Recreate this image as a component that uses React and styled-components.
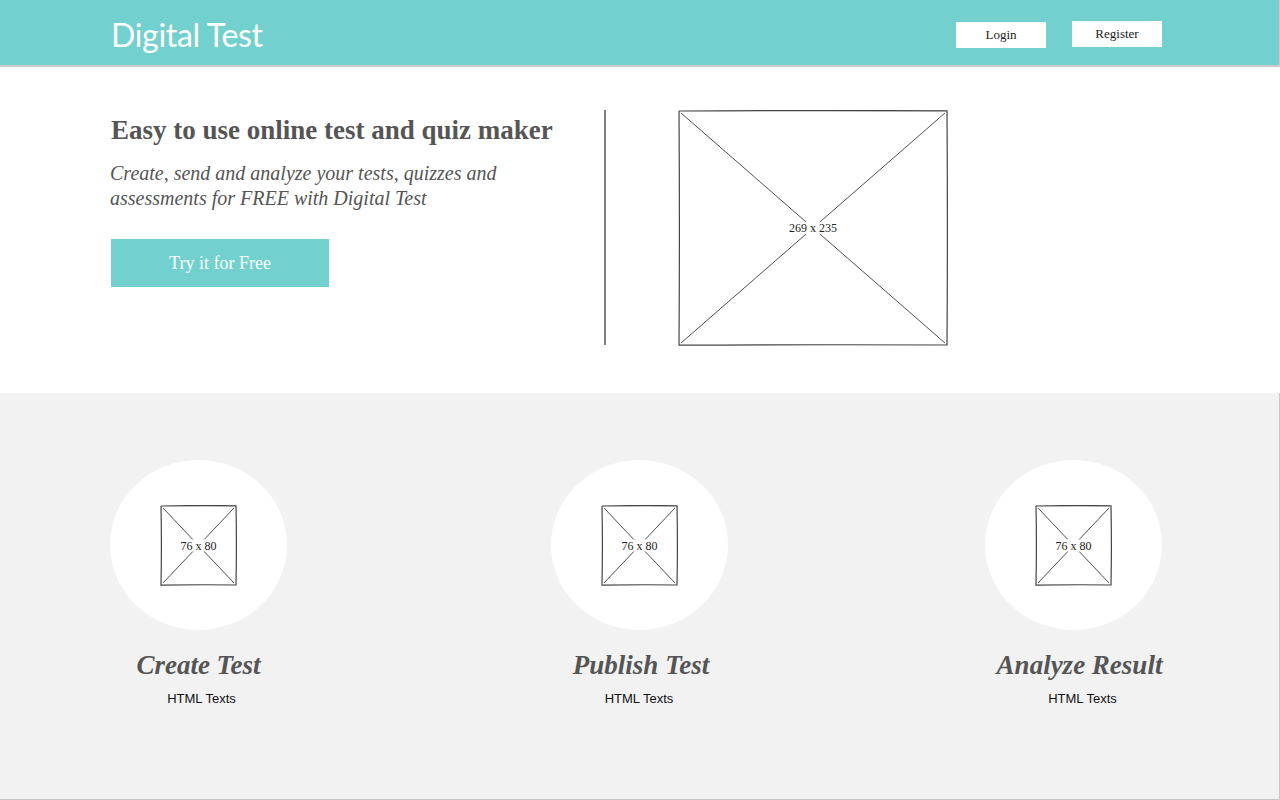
import React from 'react'
import styled, { createGlobalStyle } from 'styled-components'

const teal = '#72d1ce'
const ink = '#555555'

const GlobalStyle = createGlobalStyle`
    body {
        margin: 0;
        background: #ffffff;
        font-family: "Liberation Serif", "Times New Roman", serif;
    }
`

// dx values nudge the captions the way the mockup has them
const features = [
    { title: 'Create Test', text: 'HTML Texts', shift: 0, titleDx: 0, textDx: 3 },
    { title: 'Publish Test', text: 'HTML Texts', shift: 3, titleDx: 2, textDx: 0 },
    { title: 'Analyze Result', text: 'HTML Texts', shift: 0, titleDx: 6, textDx: 9 },
]

// wireframe image placeholder, diagonals stop just around the label
function Sketch({ w, h, label }) {
    const i = 3
    const cx = w / 2
    const cy = h / 2
    const g = 6
    const dx = ((cy - g - i) * (w - 2 * i)) / (h - 2 * i)
    const a = i + dx
    const b = w - i - dx
    return (
        <svg width={w} height={h} viewBox={`0 0 ${w} ${h}`}>
            <path
                d={`M1,1 Q${cx},0.2 ${w - 1},0.8 Q${w - 0.2},${cy} ${w - 1},${h - 1} Q${cx},${h - 1.6} 1,${h - 0.8} Q1.8,${cy} 1,1`}
                fill="none"
                stroke="#444"
                strokeWidth="1.2"
            />
            <line x1={i} y1={i} x2={a} y2={cy - g} stroke="#222" strokeWidth="0.8" />
            <line x1={w - i} y1={i} x2={b} y2={cy - g} stroke="#222" strokeWidth="0.8" />
            <line x1={a} y1={cy + g} x2={i} y2={h - i} stroke="#222" strokeWidth="0.8" />
            <line x1={b} y1={cy + g} x2={w - i} y2={h - i} stroke="#222" strokeWidth="0.8" />
            <text
                x={cx}
                y={cy + 4}
                textAnchor="middle"
                fontSize="12"
                fontFamily="Liberation Serif, serif"
                fill="#222"
            >
                {label}
            </text>
        </svg>
    )
}

function App() {
    return (
        <>
            <GlobalStyle />
            <Header>
                <Brand>Digital Test</Brand>
                <NavButtons>
                    <NavButton $top={2}>Login</NavButton>
                    <NavButton $top={1}>Register</NavButton>
                </NavButtons>
            </Header>
            <Hero>
                <Intro>
                    <h1>Easy to use online test and quiz maker</h1>
                    <p>Create, send and analyze your tests, quizzes and assessments for FREE with Digital Test</p>
                    <TryButton>Try it for Free</TryButton>
                </Intro>
                <Divider />
                <Sketch w={270} h={236} label="269 x 235" />
            </Hero>
            <Features>
                {features.map((f) => (
                    <Feature key={f.title} $shift={f.shift}>
                        <Circle>
                            <Sketch w={77} h={81} label="76 x 80" />
                        </Circle>
                        <FeatureTitle $dx={f.titleDx}>{f.title}</FeatureTitle>
                        <FeatureText $dx={f.textDx}>{f.text}</FeatureText>
                    </Feature>
                ))}
            </Features>
        </>
    )
}

const Header = styled.header`
    box-sizing: border-box;
    height: 67px;
    background: ${teal};
    border-bottom: 2px solid #cccccc;
    border-right: 1px solid #c8c8c8;
    display: flex;
    align-items: center;
    justify-content: space-between;
    padding: 4px 117px 0 111px;
`

const Brand = styled.div`
    font-family: Lato, "Open Sans", sans-serif;
    font-size: 32px;
    color: #ffffff;
    letter-spacing: -0.3px;
`

const NavButtons = styled.div`
    display: flex;
    gap: 26px;
    align-items: flex-start;
    height: 29px;
`

const NavButton = styled.button`
    width: 90px;
    height: 26px;
    border: none;
    background: #ffffff;
    font-family: "Liberation Serif", serif;
    font-size: 13px;
    color: #222;
    padding: 0;
    margin-top: ${(p) => p.$top}px;
    cursor: pointer;
`

const Hero = styled.section`
    display: flex;
    align-items: flex-start;
    height: 326px;
    box-sizing: border-box;
    padding: 43px 0 0 111px;
`

const Intro = styled.div`
    width: 493px;
    h1 {
        margin: 0;
        font-size: 27px;
        line-height: 40px;
        font-weight: 700;
        color: ${ink};
        white-space: nowrap;
    }
    p {
        max-width: 420px;
        margin: 11px 0 0 -1px;
        font-size: 20px;
        line-height: 25px;
        font-style: italic;
        color: ${ink};
    }
`

const TryButton = styled.button`
    margin-top: 28px;
    width: 218px;
    height: 48px;
    border: none;
    background: ${teal};
    color: #ffffff;
    font-family: "Liberation Serif", serif;
    font-size: 18px;
    cursor: pointer;
`

const Divider = styled.div`
    width: 2px;
    height: 235px;
    background: #808080;
    margin-right: 72px;
`

const Features = styled.section`
    box-sizing: border-box;
    height: 407px;
    background: #f2f2f2;
    border-right: 1px solid #c8c8c8;
    border-bottom: 1px solid #c8c8c8;
    display: flex;
    justify-content: space-between;
    padding: 67px 117px 0 110px;
`

const Feature = styled.div`
    width: 177px;
    display: flex;
    flex-direction: column;
    align-items: center;
    transform: translateX(${(p) => p.$shift}px);
`

const FeatureTitle = styled.h2`
    margin: 18px 0 0;
    font-size: 27px;
    line-height: 34px;
    font-weight: 700;
    font-style: italic;
    color: ${ink};
    white-space: nowrap;
    transform: translateX(${(p) => p.$dx}px);
`

const FeatureText = styled.span`
    margin-top: 9px;
    font-family: "Liberation Sans", Arial, sans-serif;
    font-size: 13px;
    color: #111;
    transform: translateX(${(p) => p.$dx}px);
`

const Circle = styled.div`
    width: 177px;
    height: 170px;
    border-radius: 50%;
    background: #ffffff;
    display: flex;
    align-items: center;
    justify-content: center;
`

export default App
